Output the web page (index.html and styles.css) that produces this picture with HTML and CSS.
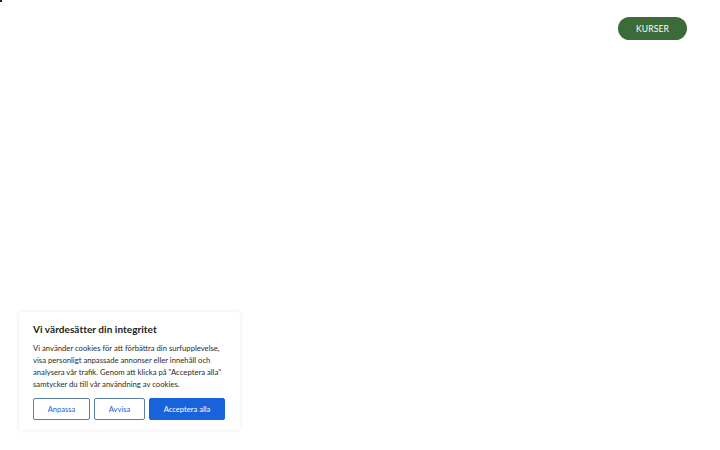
FILE: index.html
```html
<!DOCTYPE html>
<html lang="sv">
<head>
<meta charset="utf-8">
<link rel="stylesheet" href="styles.css">
</head>
<body>
<div class="dot"></div>
<header class="top">
  <a class="kurser">KURSER</a>
</header>
<main class="page"></main>
<div class="consent">
  <h2 class="title">Vi värdesätter din integritet</h2>
  <p class="text">Vi använder cookies för att förbättra din surfupplevelse, visa personligt anpassade annonser eller innehåll och analysera vår trafik. Genom att klicka på "Acceptera alla" samtycker du till vår användning av cookies.</p>
  <div class="actions">
    <button class="btn outline w1">Anpassa</button>
    <button class="btn outline w2">Avvisa</button>
    <button class="btn solid">Acceptera alla</button>
  </div>
</div>
</body>
</html>
```
FILE: styles.css
```css
html, body { margin: 0; padding: 0; background: #fff; }
body { width: 720px; height: 450px; overflow: hidden; font-family: Lato, "Open Sans", sans-serif; position: relative; }
.dot { position: absolute; left: 0; top: 0; width: 2px; height: 2px; background: #222; }
.top { display: flex; justify-content: flex-end; padding: 17px 33px 0 0; }
.kurser { display: flex; align-items: center; justify-content: center; width: 69px; height: 23px; border-radius: 12px; background: #3a6b38; color: #fff; font-size: 8.6px; font-weight: 400; letter-spacing: 0.1px; }
.consent { position: absolute; left: 19px; top: 312px; width: 221px; height: 118px; box-sizing: border-box; padding: 10px 14px 0 14px; background: #fff; border-radius: 3px; box-shadow: 0 0 4px rgba(0,0,0,0.09); }
.title { margin: 0; font-size: 10px; font-weight: 700; color: #222; line-height: 14px; letter-spacing: 0.05px; }
.text { margin: 6px 0 0 0; font-size: 7.7px; line-height: 12px; color: #2b2b2b; width: 192px; }
.actions { display: flex; gap: 4px; margin-top: 8px; }
.btn { height: 22px; box-sizing: border-box; font-family: inherit; font-size: 7.6px; border-radius: 2px; padding: 0; display: flex; align-items: center; justify-content: center; }
.outline { background: #fff; border: 1.5px solid #5c80ad; color: #1863dc; }
.w1 { width: 57px; }
.w2 { width: 51px; }
.solid { width: 76px; background: #1863dc; border: 1.5px solid #1863dc; color: #fff; }
```
